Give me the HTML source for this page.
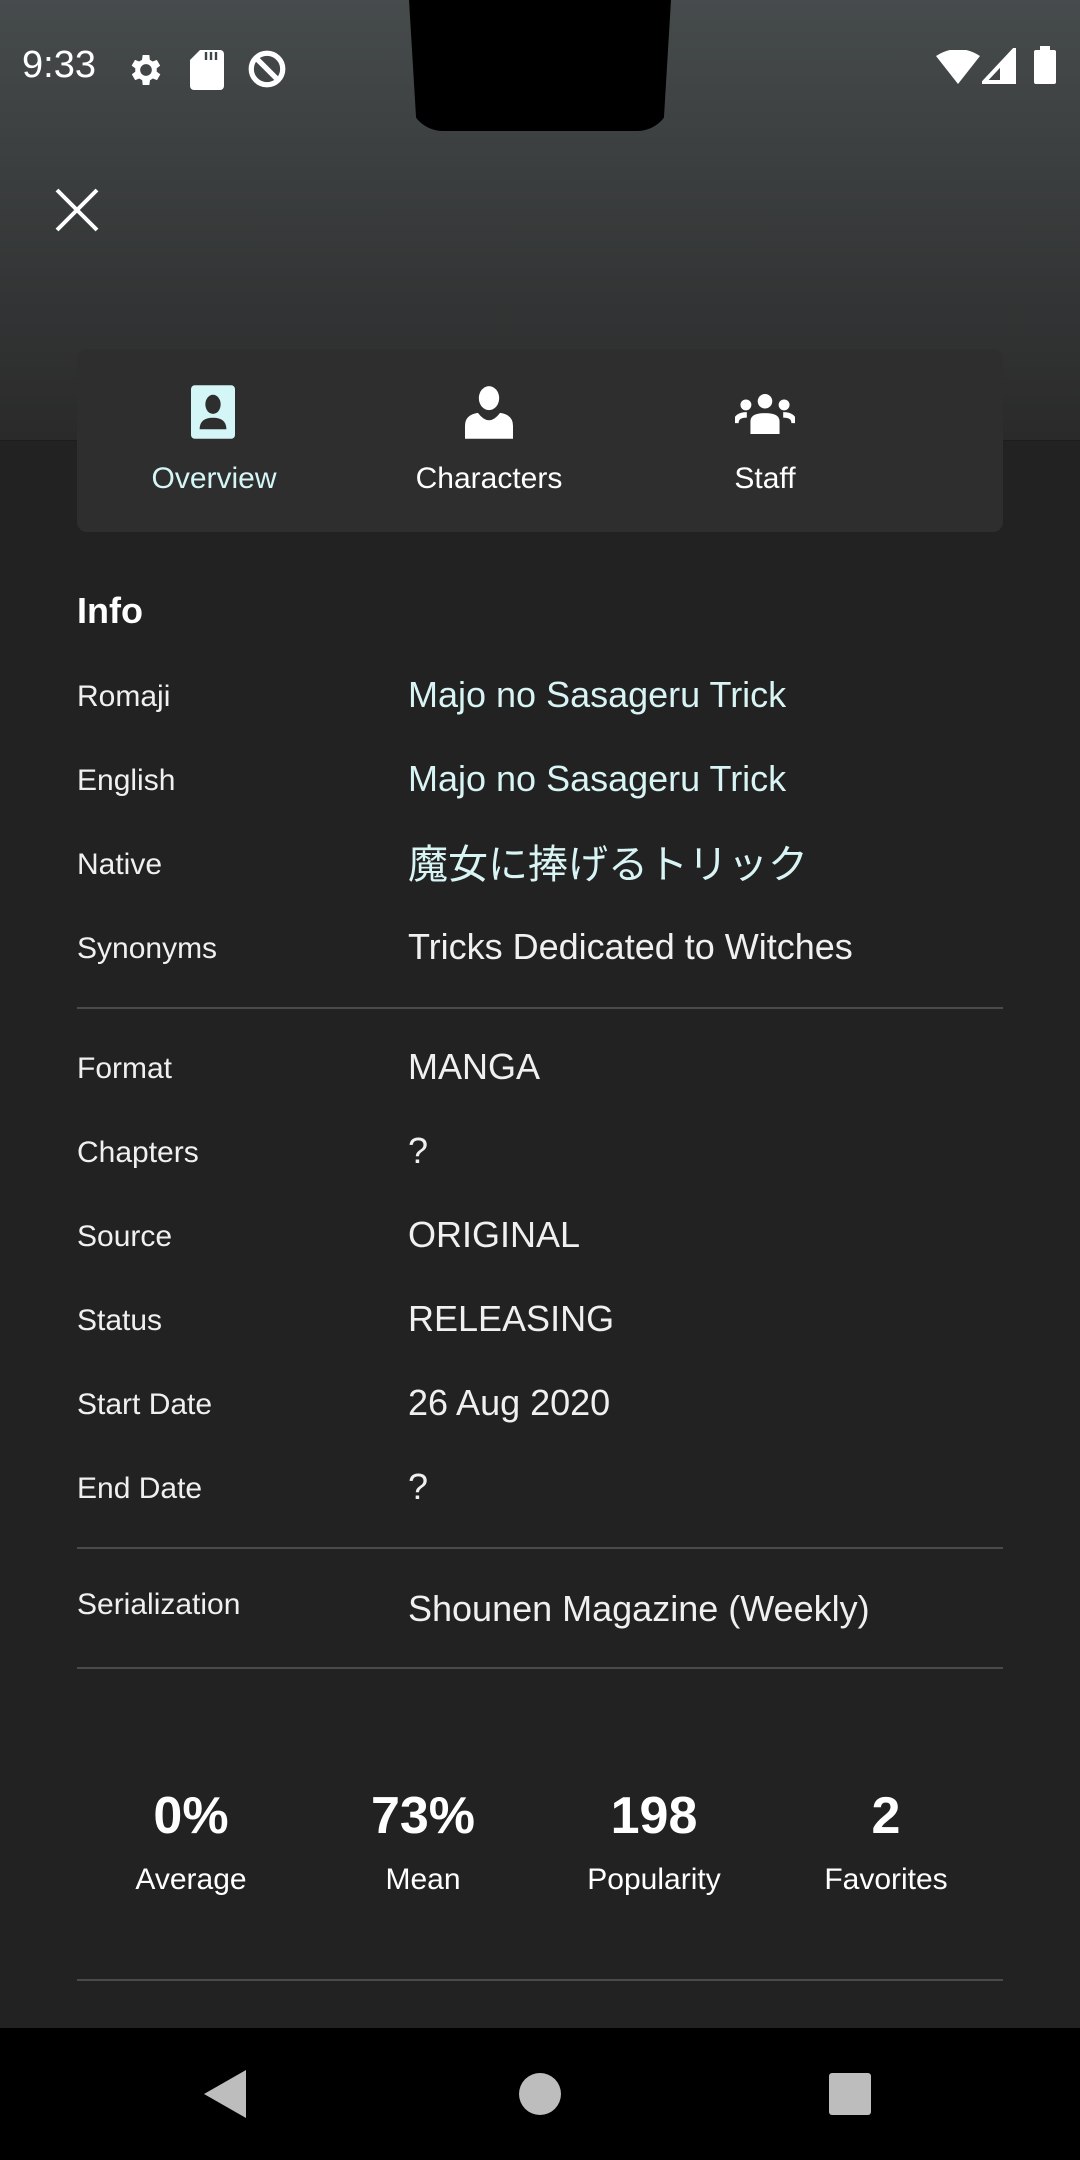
<!DOCTYPE html>
<html><head><meta charset="utf-8"><style>
*{margin:0;padding:0;box-sizing:border-box}
body{width:1080px;height:2160px;background:#222;position:relative;overflow:hidden;font-family:"Liberation Sans","Noto Sans CJK JP",sans-serif;color:#fff}
.top{position:absolute;left:0;top:0;width:1080px;height:441px;background:linear-gradient(#464b4c,#2a2a2a);border-bottom:1px solid #1d1d1d}
.notch{position:absolute;left:409px;top:0;width:262px;height:131px;background:#000;border-radius:0 0 34px 34px;clip-path:polygon(0 0,100% 0,97% 100%,3% 100%)}
.t{position:absolute;white-space:nowrap}
.card{position:absolute;left:77px;top:349px;width:926px;height:183px;background:#2e2e2e;border-radius:10px}
.tab{position:absolute;top:462px;font-size:30px;text-align:center;width:240px;margin-left:-120px}
.lab{position:absolute;left:77px;font-size:30px;color:#f0f0f0}
.val{position:absolute;left:408px;font-size:36px;color:#f0f0f0;white-space:nowrap}
.teal{color:#d8f4f4}
.hr{position:absolute;left:77px;width:926px;height:2px;background:#4a4a4a}
.sn{position:absolute;width:240px;margin-left:-120px;text-align:center}
.nav{position:absolute;left:0;top:2028px;width:1080px;height:132px;background:#000}
</style></head><body>
<div class="top"></div>
<div class="notch"></div>
<div class="t" style="left:22px;top:44px;font-size:38px;color:#fff">9:33</div>
<svg style="position:absolute;left:126px;top:50px" width="40" height="40" viewBox="0 0 24 24"><path fill="#fff" d="M19.4 13a7.5 7.5 0 000-2l2.1-1.6-2-3.5-2.5 1a7 7 0 00-1.7-1L15 3h-4l-.4 2.9a7 7 0 00-1.7 1l-2.5-1-2 3.5L6.6 11a7.5 7.5 0 000 2l-2.1 1.6 2 3.5 2.5-1a7 7 0 001.7 1L11 21h4l.4-2.9a7 7 0 001.7-1l2.5 1 2-3.5zM13 15.5a3.5 3.5 0 110-7 3.5 3.5 0 010 7z" transform="translate(-1 0)"/></svg>
<svg style="position:absolute;left:190px;top:50px" width="34" height="40" viewBox="0 0 17 20"><path fill="#fff" d="M5 0h10a2 2 0 012 2v16a2 2 0 01-2 2H2a2 2 0 01-2-2V5z"/><path stroke="#3f4445" stroke-width="1.2" d="M8 1v4M10.5 1v4M13 1v4"/></svg>
<svg style="position:absolute;left:246px;top:48px" width="42" height="42" viewBox="0 0 24 24"><circle cx="12" cy="12" r="9" fill="none" stroke="#fff" stroke-width="3"/><path d="M6 6l12 12" stroke="#fff" stroke-width="3"/></svg>
<svg style="position:absolute;left:936px;top:50px" width="44" height="34" viewBox="0 0 22 17"><path fill="#fff" d="M0 3Q11-4 22 3L11 17z"/></svg>
<svg style="position:absolute;left:982px;top:48px" width="34" height="36" viewBox="0 0 17 18"><path fill="none" stroke="#fff" stroke-width="2" d="M16 1V17H1z"/><path fill="#fff" d="M9 9L16 1V17H9z"/></svg>
<svg style="position:absolute;left:1034px;top:46px" width="22" height="38" viewBox="0 0 11 19"><rect x="3" y="0" width="5" height="2" fill="#fff"/><rect x="0" y="2" width="11" height="17" rx="1" fill="#fff"/></svg>
<svg style="position:absolute;left:53px;top:186px" width="48" height="48" viewBox="0 0 48 48"><path d="M4 4L44 44M44 4L4 44" stroke="#fff" stroke-width="4"/></svg>

<div class="card"></div>
<svg style="position:absolute;left:191px;top:385px" width="44" height="54" viewBox="0 0 46 56"><rect width="46" height="56" rx="4" fill="#d4f6f7"/><ellipse cx="23" cy="20" rx="8" ry="10" fill="#2e2e2e"/><path d="M9 46q0-12 14-12t14 12z" fill="#2e2e2e"/></svg>
<svg style="position:absolute;left:465px;top:385px" width="48" height="54" viewBox="0 0 52 58"><ellipse cx="26" cy="14" rx="11" ry="13" fill="#fff"/><path d="M0 58V44q0-12 14-14q6 8 12 8t12-8q14 2 14 14v14z" fill="#fff"/></svg>
<svg style="position:absolute;left:735px;top:394px" width="60" height="40" viewBox="0 0 64 44"><circle cx="32" cy="8" r="8" fill="#fff"/><circle cx="11" cy="12" r="6" fill="#fff"/><circle cx="53" cy="12" r="6" fill="#fff"/><path d="M16 44V30q0-9 16-9t16 9v14z" fill="#fff"/><path d="M0 32q0-9 12-9 M64 32q0-9-12-9" stroke="#fff" stroke-width="6" fill="none"/></svg>
<div class="tab" style="left:214px;color:#d4f6f7">Overview</div>
<div class="tab" style="left:489px">Characters</div>
<div class="tab" style="left:765px">Staff</div>

<div class="t" style="left:77px;top:590px;font-size:36px;font-weight:bold">Info</div>
<div class="lab" style="top:680px">Romaji</div><div class="val teal" style="top:674px">Majo no Sasageru Trick</div>
<div class="lab" style="top:764px">English</div><div class="val teal" style="top:758px">Majo no Sasageru Trick</div>
<div class="lab" style="top:848px">Native</div><div class="val teal" style="top:832px;font-size:40px">魔女に捧げるトリック</div>
<div class="lab" style="top:932px">Synonyms</div><div class="val" style="top:926px">Tricks Dedicated to Witches</div>
<div class="hr" style="top:1007px"></div>
<div class="lab" style="top:1052px">Format</div><div class="val" style="top:1046px">MANGA</div>
<div class="lab" style="top:1136px">Chapters</div><div class="val" style="top:1130px">?</div>
<div class="lab" style="top:1220px">Source</div><div class="val" style="top:1214px">ORIGINAL</div>
<div class="lab" style="top:1304px">Status</div><div class="val" style="top:1298px">RELEASING</div>
<div class="lab" style="top:1388px">Start Date</div><div class="val" style="top:1382px">26 Aug 2020</div>
<div class="lab" style="top:1472px">End Date</div><div class="val" style="top:1466px">?</div>
<div class="hr" style="top:1547px"></div>
<div class="lab" style="top:1588px">Serialization</div><div class="val" style="top:1588px">Shounen Magazine (Weekly)</div>
<div class="hr" style="top:1667px"></div>

<div class="sn" style="left:191px;top:1786px;font-size:52px;font-weight:bold">0%</div>
<div class="sn" style="left:423px;top:1786px;font-size:52px;font-weight:bold">73%</div>
<div class="sn" style="left:654px;top:1786px;font-size:52px;font-weight:bold">198</div>
<div class="sn" style="left:886px;top:1786px;font-size:52px;font-weight:bold">2</div>
<div class="sn" style="left:191px;top:1863px;font-size:30px">Average</div>
<div class="sn" style="left:423px;top:1863px;font-size:30px">Mean</div>
<div class="sn" style="left:654px;top:1863px;font-size:30px">Popularity</div>
<div class="sn" style="left:886px;top:1863px;font-size:30px">Favorites</div>
<div class="hr" style="top:1979px"></div>

<div class="nav"></div>
<svg style="position:absolute;left:204px;top:2070px" width="42" height="48" viewBox="0 0 42 48"><path d="M0 24L42 0V48z" fill="#bdbdbd"/></svg>
<div style="position:absolute;left:519px;top:2073px;width:42px;height:42px;border-radius:50%;background:#bdbdbd"></div>
<div style="position:absolute;left:829px;top:2073px;width:42px;height:42px;border-radius:3px;background:#bdbdbd"></div>
</body></html>
